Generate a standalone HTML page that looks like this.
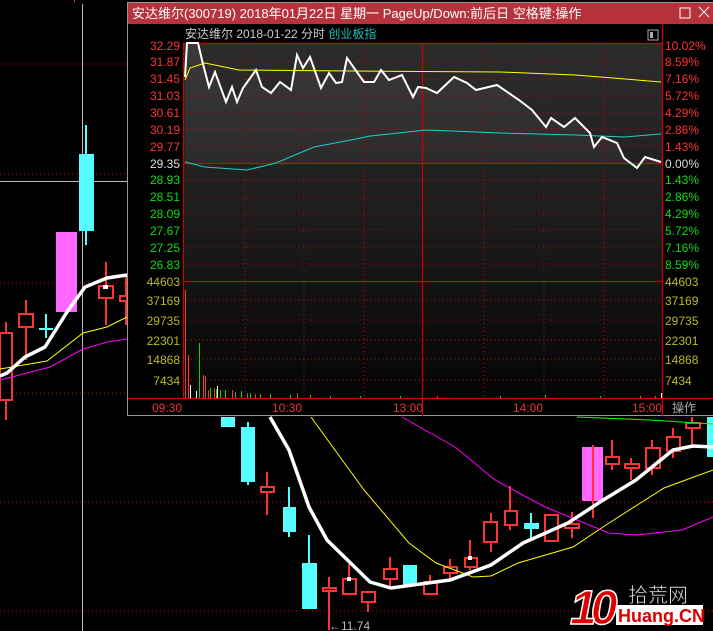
<!DOCTYPE html>
<html><head><meta charset="utf-8"><style>
body{margin:0;background:#000;width:713px;height:631px;overflow:hidden}
svg{display:block}
text{font-family:"Liberation Sans","Noto Sans CJK SC",sans-serif}
</style></head><body>
<svg width="713" height="631" viewBox="0 0 713 631" xmlns="http://www.w3.org/2000/svg">
<defs>
<linearGradient id="bg" x1="0" y1="0" x2="0" y2="1">
<stop offset="0" stop-color="#2c2c2c"/><stop offset="0.5" stop-color="#1c1c1c"/><stop offset="1" stop-color="#050505"/>
</linearGradient>
<linearGradient id="fill" x1="0" y1="0" x2="0" y2="1">
<stop offset="0" stop-color="#3a3a3a"/><stop offset="1" stop-color="#2a2a2a"/>
</linearGradient>
</defs>
<!-- main chart grid -->
<g stroke="#c00" stroke-dasharray="1,3" stroke-width="1">
<line x1="0" y1="64" x2="127" y2="64"/><line x1="0" y1="174" x2="127" y2="174"/>
<line x1="0" y1="283" x2="127" y2="283"/><line x1="0" y1="393" x2="127" y2="393"/>
<line x1="0" y1="502" x2="713" y2="502"/><line x1="0" y1="611" x2="713" y2="611"/>
</g>
<line x1="82.5" y1="4" x2="82.5" y2="631" stroke="#bbb"/>
<line x1="0" y1="181.5" x2="127" y2="181.5" stroke="#bbb"/>
<line x1="74.5" y1="0" x2="74.5" y2="2" stroke="#f33"/>
<!-- left candles -->
<g stroke="#f33" stroke-width="2" fill="none">
<line x1="6" y1="322" x2="6" y2="420"/><rect x="0" y="333" width="12" height="67" fill="#000"/>
<line x1="26" y1="300" x2="26" y2="360"/><rect x="19" y="314" width="14" height="13" fill="#000"/>
<line x1="106" y1="262" x2="106" y2="325"/><rect x="99" y="286" width="14" height="12" fill="#000"/>
<line x1="126" y1="276" x2="126" y2="325"/><rect x="120" y="296" width="7" height="5" fill="#000"/>
</g>
<rect x="103" y="285" width="5" height="4" fill="#fff"/>
<g stroke="#5ff" stroke-width="2"><line x1="39" y1="329" x2="53" y2="329"/><line x1="46" y1="314" x2="46" y2="338"/>
<line x1="86" y1="125" x2="86" y2="245"/></g>
<rect x="79" y="154" width="15" height="77" fill="#5ff"/>
<rect x="56" y="232" width="21" height="80" fill="#f6f"/>
<!-- bottom candles -->
<g fill="#5ff" stroke="#5ff" stroke-width="2">
<line x1="248" y1="422" x2="248" y2="485"/><line x1="289" y1="487" x2="289" y2="537"/>
<line x1="309" y1="535" x2="309" y2="609"/><line x1="410" y1="565" x2="410" y2="585"/>
<line x1="531" y1="513" x2="531" y2="541"/>
</g>
<rect x="221" y="417" width="14" height="10" fill="#5ff"/>
<rect x="241" y="427" width="14" height="55" fill="#5ff"/>
<rect x="283" y="507" width="13" height="25" fill="#5ff"/>
<rect x="302" y="563" width="15" height="46" fill="#5ff"/>
<rect x="403" y="565" width="14" height="20" fill="#5ff"/>
<rect x="524" y="523" width="15" height="6" fill="#5ff"/>
<rect x="707" y="417" width="6" height="40" fill="#5ff"/>
<rect x="582" y="447" width="21" height="54" fill="#f6f"/>
<g stroke="#f33" stroke-width="2" fill="none">
<line x1="267" y1="472" x2="267" y2="515"/><rect x="261" y="487" width="13" height="5" fill="#000"/>
<line x1="329" y1="577" x2="329" y2="630"/><rect x="323" y="588" width="13" height="3" fill="#000"/>
<line x1="349" y1="564" x2="349" y2="579"/><rect x="343" y="579" width="13" height="15" fill="#000"/>
<line x1="368" y1="592" x2="368" y2="612"/><rect x="362" y="592" width="13" height="10" fill="#000"/>
<line x1="390" y1="557" x2="390" y2="589"/><rect x="384" y="569" width="13" height="10" fill="#000"/>
<line x1="430" y1="575" x2="430" y2="582"/><rect x="424" y="582" width="13" height="12" fill="#000"/>
<line x1="450" y1="559" x2="450" y2="580"/><rect x="444" y="567" width="13" height="6" fill="#000"/>
<line x1="470" y1="540" x2="470" y2="570"/><rect x="465" y="558" width="12" height="9" fill="#000"/>
<line x1="491" y1="513" x2="491" y2="552"/><rect x="484" y="522" width="13" height="20" fill="#000"/>
<line x1="510" y1="486" x2="510" y2="530"/><rect x="505" y="511" width="12" height="14" fill="#000"/>
<rect x="545" y="515" width="13" height="26" fill="#000"/>
<line x1="572" y1="512" x2="572" y2="538"/><rect x="565" y="524" width="14" height="4" fill="#000"/>
<line x1="593" y1="445" x2="593" y2="518"/>
<line x1="612" y1="440" x2="612" y2="470"/><rect x="606" y="457" width="13" height="7" fill="#000"/>
<line x1="631" y1="458" x2="631" y2="480"/><rect x="625" y="464" width="14" height="4" fill="#000"/>
<line x1="652" y1="440" x2="652" y2="475"/><rect x="646" y="448" width="14" height="20" fill="#000"/>
<line x1="673" y1="428" x2="673" y2="458"/><rect x="667" y="437" width="13" height="14" fill="#000"/>
<line x1="692" y1="417" x2="692" y2="445"/><rect x="686" y="423" width="14" height="5" fill="#000"/>
</g>
<rect x="347" y="577" width="4" height="4" fill="#fff"/><rect x="468" y="556" width="4" height="4" fill="#fff"/>
<!-- MAs -->
<polyline fill="none" stroke="#ff0" stroke-width="1" points="0,369 47,361 83,333 107,327 127,317"/>
<polyline fill="none" stroke="#f0f" stroke-width="1" points="0,380 50,367 83,349 107,342 127,339"/>
<polyline fill="none" stroke="#fff" stroke-width="3.5" points="0,376 7,373 25,357 45,347 67,312 85,287 107,278 127,275"/>
<polyline fill="none" stroke="#ff0" stroke-width="1" points="311,417 364,490 409,543 436,563 473,577 491,576 518,563 573,547 609,523 664,488 713,470"/>
<polyline fill="none" stroke="#f0f" stroke-width="1" points="402,417 455,447 495,480 545,507 609,533 636,535 682,530 713,517"/>
<polyline fill="none" stroke="#0f0" stroke-width="1" points="577,417 650,420 713,424"/>
<polyline fill="none" stroke="#fff" stroke-width="3.5" points="270,417 289,450 309,507 327,540 370,582 391,588 450,580 491,565 523,543 568,523 600,502 636,480 673,450 693,446 713,447"/>
<text x="329" y="630" font-size="12" fill="#bbb">←11.74</text>
<!-- logo -->
<text x="570" y="624" font-size="48" font-weight="bold" fill="#d00" stroke="#fff" stroke-width="1.5" letter-spacing="-6" font-style="italic">10</text>
<text x="628" y="602" font-size="20" fill="#ddd" stroke="#000" stroke-width="0.5" font-family="Noto Sans CJK SC">拾荒网</text>
<rect x="616" y="605" width="87" height="20" fill="#fff"/>
<text x="618" y="622" font-size="18" font-weight="bold" fill="#d00">Huang.CN</text>
<!-- popup -->
<rect x="127.5" y="2.5" width="586" height="413" fill="#000" stroke="#999"/>
<rect x="128" y="3" width="585" height="21" fill="#b7333b"/>
<text x="132" y="18" font-size="13" fill="#fff">安达维尔(300719) 2018年01月22日 星期一 PageUp/Down:前后日 空格键:操作</text>
<rect x="680" y="8" width="10" height="10" fill="none" stroke="#fff"/>
<path d="M699 7 L709 17 M709 7 L699 17" stroke="#fff" stroke-width="1"/>
<text x="185" y="38" font-size="12" fill="#ccc">安达维尔   2018-01-22 分时 <tspan fill="#2bb">创业板指</tspan></text>
<rect x="648" y="30" width="10" height="10" fill="none" stroke="#aaa"/><rect x="650" y="32" width="3" height="6" fill="#aaa"/>
<rect x="183" y="43" width="479" height="355" fill="url(#bg)"/>
<polygon fill="url(#fill)" points="185,163 185,77 187,43 198,43 202,60 209,87 215,72 226,102 232,87 237,102 243,88 256,70 262,87 271,93 280,82 291,90 297,55 303,68 310,57 321,88 329,73 336,83 342,82 347,58 364,82 374,82 381,70 389,80 402,75 413,97 418,87 426,88 437,93 454,77 467,83 476,90 497,85 519,100 532,110 546,127 551,118 564,127 575,118 590,133 594,147 602,137 617,143 624,158 637,168 645,157 661,162 661,163"/>
<g stroke="#c00" stroke-dasharray="1,3">
<path d="M183 62H662M183 79H662M183 96H662M183 113H662M183 129H662M183 146H662M183 180H662M183 197H662M183 214H662M183 230H662M183 247H662M183 264H662M183 300H662M183 320H662M183 340H662M183 359H662M183 380H662"/>
<path d="M245 43V398M304 43V398M364 43V398M484 43V398M544 43V398M604 43V398"/>
</g>
<g stroke="#c00" stroke-width="1.2">
<path d="M183 43.5H662M183 163.5H662M183 281.5H662M128 398.5H713M183.5 43V398M422.5 43V416M662.5 24V416"/>
</g>
<polyline fill="none" stroke="#ff0" points="185,80 190,68 205,63 239,70 351,71 501,72 575,75 613,78 661,82"/>
<polyline fill="none" stroke="#2cc" points="185,162 205,167 247,170 276,163 314,147 351,140 370,136 426,130 501,133 575,135 624,137 661,134"/>
<polyline fill="none" stroke="#fff" stroke-width="2" points="185,77 187,43 198,43 202,60 209,87 215,72 226,102 232,87 237,102 243,88 256,70 262,87 271,93 280,82 291,90 297,55 303,68 310,57 321,88 329,73 336,83 342,82 347,58 364,82 374,82 381,70 389,80 402,75 413,97 418,87 426,88 437,93 454,77 467,83 476,90 497,85 519,100 532,110 546,127 551,118 564,127 575,118 590,133 594,147 602,137 617,143 624,158 637,168 645,157 661,162"/>
<!-- volume -->
<g stroke-width="1">
<path stroke="#f33" d="M185.5 290V398M188.5 355V398M203.5 375V398M205.5 376V398M208.5 390V398M214.5 388V398M232.5 390V398M247.5 393V398M255.5 394V398M297.5 393V398M437.5 396V398M655.5 396V398"/>
<path stroke="#0d0" d="M199.5 343V398M210.5 388V398M216.5 389V398M220.5 390V398M225.5 390V398M235.5 392V398M241.5 391V398M250.5 393V398M260.5 394V398M270.5 394V398M290.5 395V398M310.5 395V398M330.5 396V398M360.5 396V398M400.5 396V398M500.5 396V398M545.5 395V398M600.5 396V398M640.5 396V398"/>
<path stroke="#fff" d="M190.5 385V398M196.5 391V398M217.5 386V398M661.5 393V398"/>
</g>
<!-- left labels -->
<g font-size="12" text-anchor="end">
<text x="180" y="50" fill="#f33">32.29</text><text x="180" y="66" fill="#f33">31.87</text>
<text x="180" y="83" fill="#f33">31.45</text><text x="180" y="100" fill="#f33">31.03</text>
<text x="180" y="117" fill="#f33">30.61</text><text x="180" y="134" fill="#f33">30.19</text>
<text x="180" y="151" fill="#f33">29.77</text><text x="180" y="168" fill="#ddd">29.35</text>
<text x="180" y="184" fill="#1d1">28.93</text><text x="180" y="201" fill="#1d1">28.51</text>
<text x="180" y="218" fill="#1d1">28.09</text><text x="180" y="235" fill="#1d1">27.67</text>
<text x="180" y="252" fill="#1d1">27.25</text><text x="180" y="269" fill="#1d1">26.83</text>
<g fill="#bb2"><text x="180" y="286">44603</text><text x="180" y="305">37169</text><text x="180" y="325">29735</text>
<text x="180" y="345">22301</text><text x="180" y="364">14868</text><text x="180" y="385">7434</text></g>
</g>
<g font-size="12">
<text x="665" y="50" fill="#f33">10.02%</text><text x="665" y="66" fill="#f33">8.59%</text>
<text x="665" y="83" fill="#f33">7.16%</text><text x="665" y="100" fill="#f33">5.72%</text>
<text x="665" y="117" fill="#f33">4.29%</text><text x="665" y="134" fill="#f33">2.86%</text>
<text x="665" y="151" fill="#f33">1.43%</text><text x="665" y="168" fill="#ddd">0.00%</text>
<text x="665" y="184" fill="#1d1">1.43%</text><text x="665" y="201" fill="#1d1">2.86%</text>
<text x="665" y="218" fill="#1d1">4.29%</text><text x="665" y="235" fill="#1d1">5.72%</text>
<text x="665" y="252" fill="#1d1">7.16%</text><text x="665" y="269" fill="#1d1">8.59%</text>
<g fill="#bb2"><text x="665" y="286">44603</text><text x="665" y="305">37169</text><text x="665" y="325">29735</text>
<text x="665" y="345">22301</text><text x="665" y="364">14868</text><text x="665" y="385">7434</text></g>
<g fill="#e33"><text x="152" y="412">09:30</text><text x="272" y="412">10:30</text><text x="393" y="412">13:00</text>
<text x="513" y="412">14:00</text><text x="632" y="412">15:00</text></g>
<text x="672" y="412" fill="#aaa">操作</text>
</g>
</svg>
</body></html>
